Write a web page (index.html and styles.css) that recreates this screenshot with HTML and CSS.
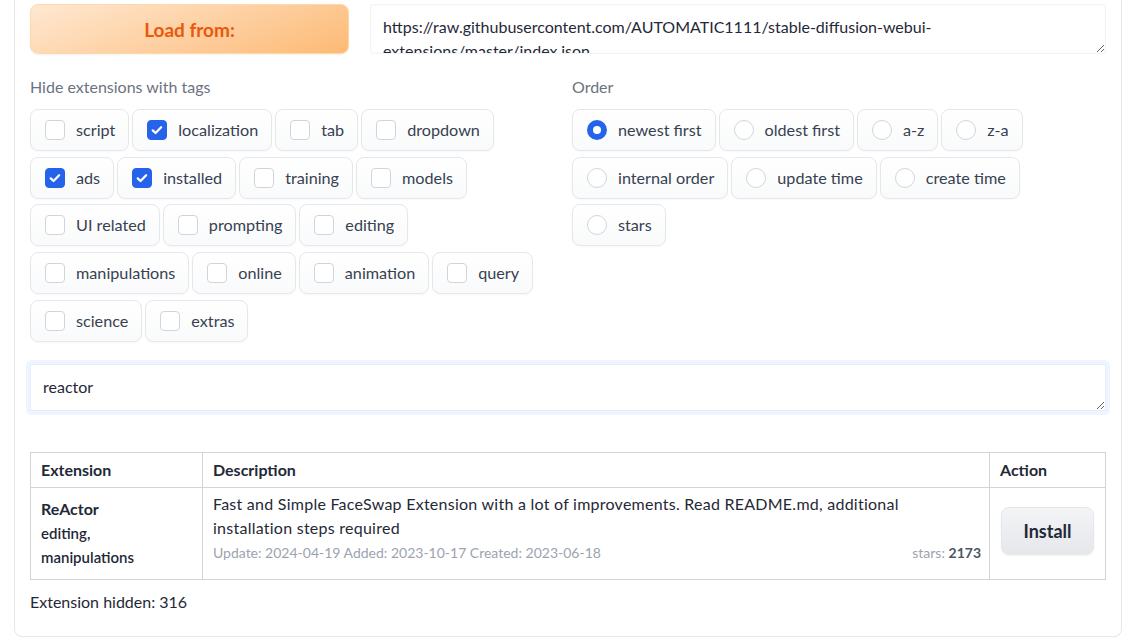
FILE: index.html
```html
<!DOCTYPE html>
<html>
<head>
<meta charset="utf-8">
<link rel="stylesheet" href="styles.css">
</head>
<body>
<div class="page">
  <div class="panel">
    <div class="load-row">
      <button class="btn-load">Load from:</button>
      <textarea class="url-box" rows="2">https://raw.githubusercontent.com/AUTOMATIC1111/stable-diffusion-webui-extensions/master/index.json</textarea>
    </div>

    <div class="filters">
      <div class="col col-tags">
        <div class="group-label">Hide extensions with tags</div>
        <div class="pills">
          <label class="pill"><span class="cb"></span>script</label>
          <label class="pill"><span class="cb on"></span>localization</label>
          <label class="pill"><span class="cb"></span>tab</label>
          <label class="pill"><span class="cb"></span>dropdown</label>
          <label class="pill"><span class="cb on"></span>ads</label>
          <label class="pill"><span class="cb on"></span>installed</label>
          <label class="pill"><span class="cb"></span>training</label>
          <label class="pill"><span class="cb"></span>models</label>
          <label class="pill"><span class="cb"></span>UI related</label>
          <label class="pill"><span class="cb"></span>prompting</label>
          <label class="pill"><span class="cb"></span>editing</label>
          <label class="pill"><span class="cb"></span>manipulations</label>
          <label class="pill"><span class="cb"></span>online</label>
          <label class="pill"><span class="cb"></span>animation</label>
          <label class="pill"><span class="cb"></span>query</label>
          <label class="pill"><span class="cb"></span>science</label>
          <label class="pill"><span class="cb"></span>extras</label>
        </div>
      </div>
      <div class="col col-order">
        <div class="group-label">Order</div>
        <div class="pills">
          <label class="pill"><span class="rd on"></span>newest first</label>
          <label class="pill"><span class="rd"></span>oldest first</label>
          <label class="pill"><span class="rd"></span>a-z</label>
          <label class="pill"><span class="rd"></span>z-a</label>
          <label class="pill"><span class="rd"></span>internal order</label>
          <label class="pill"><span class="rd"></span>update time</label>
          <label class="pill"><span class="rd"></span>create time</label>
          <label class="pill"><span class="rd"></span>stars</label>
        </div>
      </div>
    </div>

    <textarea class="search-box" rows="1">reactor</textarea>

    <table class="ext-table">
      <thead>
        <tr>
          <th class="c-ext">Extension</th>
          <th class="c-desc">Description</th>
          <th class="c-act">Action</th>
        </tr>
      </thead>
      <tbody>
        <tr>
          <td class="c-ext">
            <div class="ext-name">ReActor</div>
            <div class="ext-tags">editing,<br>manipulations</div>
          </td>
          <td class="c-desc">
            <div class="desc-text">Fast and Simple FaceSwap Extension with a lot of improvements. Read README.md, additional installation steps required</div>
            <div class="desc-meta"><span>Update: 2024-04-19 Added: 2023-10-17 Created: 2023-06-18</span><span class="stars">stars: <b>2173</b></span></div>
          </td>
          <td class="c-act"><button class="btn-install">Install</button></td>
        </tr>
      </tbody>
    </table>

    <div class="hidden-count">Extension hidden: 316</div>
  </div>
</div>
</body>
</html>
```

FILE: styles.css
```css
* { box-sizing: border-box; }

html, body {
  margin: 0;
  background: #ffffff;
}

body {
  font-family: "Lato", "Noto Sans", sans-serif;
  font-size: 16px;
  color: #1f2937;
}

.page {
  padding: 0 6px 0 14px;
}

.panel {
  border: 1px solid #e5e7eb;
  border-top: none;
  border-radius: 0 0 8px 8px;
  padding: 4px 15px 23px 15px;
}

.load-row {
  display: flex;
  gap: 21px;
  height: 50px;
}

.btn-load {
  width: 319px;
  height: 50px;
  border: 1px solid #fed7aa;
  border-radius: 8px;
  background: linear-gradient(160deg, #ffe8d1 0%, #fdca96 65%, #fdba74 100%);
  color: #ea580c;
  font-family: inherit;
  font-size: 19px;
  font-weight: 700;
  box-shadow: 0 1px 2px rgba(0,0,0,0.05);
}

.url-box {
  flex: 1;
  height: 50px;
  resize: vertical;
  border: 1px solid #f3f4f6;
  border-radius: 2px;
  background: #fff;
  box-shadow: inset 0 0 3px rgba(0,0,0,0.04);
  padding: 10px 12px;
  font-family: inherit;
  font-size: 16px;
  line-height: 24px;
  color: #1f2937;
  overflow: hidden;
  outline: none;
}

.filters {
  display: flex;
  gap: 8px;
  margin-top: 22px;
}

.col { flex: 1; min-width: 0; }

.group-label {
  color: #6b7280;
  font-size: 16px;
  line-height: 22px;
  margin-bottom: 11px;
}

.pills {
  display: flex;
  flex-wrap: wrap;
  column-gap: 3px;
  row-gap: 5.7px;
}

.pill {
  display: flex;
  align-items: center;
  gap: 11px;
  height: 42px;
  padding: 0 13px 0 14px;
  border: 1px solid #e5e7eb;
  border-radius: 8px;
  background: linear-gradient(to bottom, #ffffff, #f9fafb);
  box-shadow: 0 1px 2px rgba(0,0,0,0.03);
  color: #374151;
  font-size: 16.2px;
  line-height: 22px;
  white-space: nowrap;
}

.cb {
  width: 20px;
  height: 20px;
  flex: none;
  border: 1px solid #d1d5db;
  border-radius: 4px;
  background: #fff;
}

.cb.on {
  border-color: #2563eb;
  background-color: #2563eb;
  background-image: url("data:image/svg+xml,%3Csvg xmlns='http://www.w3.org/2000/svg' viewBox='0 0 16 16'%3E%3Cpath d='M4.2 8.3l2.5 2.4 5-5.2' fill='none' stroke='white' stroke-width='2' stroke-linecap='round' stroke-linejoin='round'/%3E%3C/svg%3E");
  background-size: 100% 100%;
}

.rd {
  width: 20px;
  height: 20px;
  flex: none;
  border: 1px solid #d1d5db;
  border-radius: 50%;
  background: #fff;
}

.rd.on {
  border: 6px solid #2563eb;
  background: #fff;
}

.search-box {
  display: block;
  width: 100%;
  height: 47px;
  margin-top: 22px;
  resize: vertical;
  border: 1px solid #e3edfc;
  border-radius: 2px;
  box-shadow: 0 0 0 4px #eff5fe;
  background: #fff;
  padding: 11px 12px;
  font-family: inherit;
  font-size: 16px;
  line-height: 22px;
  color: #1f2937;
  outline: none;
  overflow: hidden;
}

.ext-table {
  width: 100%;
  margin-top: 41px;
  border-collapse: collapse;
  table-layout: fixed;
}

.ext-table th,
.ext-table td {
  border: 1px solid #d4d4d8;
  text-align: left;
  padding: 5px 10px;
}

.ext-table th {
  font-weight: 700;
  font-size: 16px;
  line-height: 24px;
  color: #1f2937;
}

.ext-table th.c-ext { width: 172px; }
.ext-table th.c-act { width: 116px; }

.ext-table td.c-ext { vertical-align: middle; }

.ext-name {
  font-weight: 700;
  line-height: 24px;
  color: #1f2937;
}

.ext-tags {
  font-size: 15px;
  font-weight: 600;
  line-height: 24.5px;
  color: #1f2937;
}

.ext-table td.c-desc {
  vertical-align: top;
  padding: 4px 8px 16px 10px;
}

.desc-text {
  font-size: 16px;
  letter-spacing: 0.25px;
  line-height: 24px;
  margin-right: 20px;
  color: #1f2937;
}

.desc-meta {
  display: flex;
  justify-content: space-between;
  margin-top: 3px;
  font-size: 14px;
  line-height: 20px;
  color: #9ca3af;
}

.desc-meta b { color: #4b5563; font-weight: 700; }

.ext-table td.c-act {
  vertical-align: middle;
  padding: 0 10px 4px 11px;
}

.btn-install {
  width: 93px;
  height: 48px;
  border: 1px solid #e5e7eb;
  border-radius: 8px;
  background: linear-gradient(to bottom, #f3f4f6, #e5e7eb);
  font-family: inherit;
  font-size: 18px;
  font-weight: 700;
  color: #1f2937;
  box-shadow: 0 1px 2px rgba(0,0,0,0.05);
}

.hidden-count {
  margin-top: 11px;
  line-height: 22px;
  color: #1f2937;
}
```
